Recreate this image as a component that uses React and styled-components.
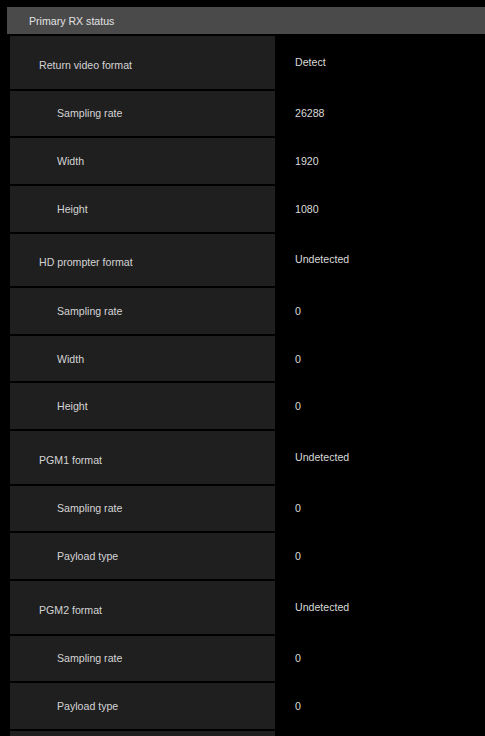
import React from "react";
import styled, { createGlobalStyle } from "styled-components";

const Global = createGlobalStyle`
  html, body {
    margin: 0;
    padding: 0;
    background: #000;
  }
  body {
    font-family: "Liberation Sans", Arial, sans-serif;
    -webkit-font-smoothing: antialiased;
  }
`;

const Page = styled.div`
  width: 485px;
  height: 736px;
  overflow: hidden;
  background: #000;
  padding: 7px 0 0 7px;
  box-sizing: border-box;
`;

const SectionHeader = styled.div`
  height: 27px;
  background: #4a4a4b;
  color: #e2e2e2;
  font-size: 10.6px;
  display: flex;
  align-items: center;
  padding-left: 22px;
  box-sizing: border-box;
`;

const Table = styled.div`
  display: flex;
  flex-direction: column;
  gap: 2px;
  margin-top: 2px;
  padding-left: 3px;
`;

const Row = styled.div`
  display: grid;
  grid-template-columns: 265px 1fr;
  height: ${(p) => (p.$main ? "52.5px" : "45.7px")};
`;

const Label = styled.div`
  background: #1f1f20;
  color: #d4d4d4;
  font-size: 10.6px;
  display: flex;
  align-items: center;
  padding-left: ${(p) => (p.$main ? "29px" : "47px")};
  padding-top: ${(p) => (p.$main ? "5px" : "0")};
  box-sizing: border-box;
`;

const Value = styled.div`
  color: #dadada;
  font-size: 10.6px;
  display: flex;
  align-items: center;
  padding-left: 20px;
  padding-bottom: ${(p) => (p.$main ? "1px" : "0")};
  box-sizing: border-box;
`;

const rows = [
  { label: "Return video format", value: "Detect", main: true },
  { label: "Sampling rate", value: "26288" },
  { label: "Width", value: "1920" },
  { label: "Height", value: "1080" },
  { label: "HD prompter format", value: "Undetected", main: true },
  { label: "Sampling rate", value: "0" },
  { label: "Width", value: "0" },
  { label: "Height", value: "0" },
  { label: "PGM1 format", value: "Undetected", main: true },
  { label: "Sampling rate", value: "0" },
  { label: "Payload type", value: "0" },
  { label: "PGM2 format", value: "Undetected", main: true },
  { label: "Sampling rate", value: "0" },
  { label: "Payload type", value: "0" },
  { label: "", value: "", main: false },
];

export default function App() {
  return (
    <>
      <Global />
      <Page>
        <SectionHeader>Primary RX status</SectionHeader>
        <Table>
          {rows.map((r, i) => (
            <Row key={i} $main={r.main}>
              <Label $main={r.main}>{r.label}</Label>
              <Value $main={r.main}>{r.value}</Value>
            </Row>
          ))}
        </Table>
      </Page>
    </>
  );
}
